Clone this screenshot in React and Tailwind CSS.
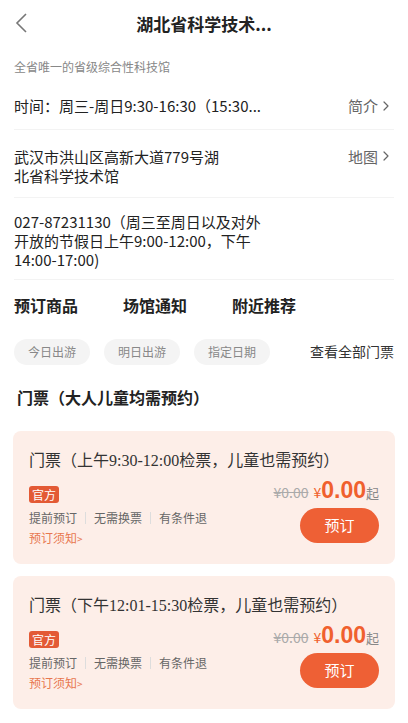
import { ChevronRight } from 'lucide-react';

const sans = 'font-["Noto_Sans_CJK_SC",sans-serif]';

const tickets = [
  { title: '门票（上午9:30-12:00检票，儿童也需预约）' },
  { title: '门票（下午12:01-15:30检票，儿童也需预约）' },
];

function TicketCard({ title }) {
  return (
    <div className="mx-[13px] rounded-lg bg-[#fdeee8] pt-[19px] pb-[16px] pl-[16px] pr-[16px]">
      <div className='font-["Liberation_Serif","Noto_Sans_CJK_SC",serif] text-[16px] leading-[22px] text-[#333]'>{title}</div>
      <div className="flex justify-between">
        <div className="pt-[9px]">
          <span className="inline-flex h-[17px] items-center rounded-[3px] bg-[#e35a35] px-[3px] text-[12px] leading-none text-white">官方</span>
          <div className="mt-[4px] flex items-center text-[12px] leading-[18px] text-[#666]">
            <span>提前预订</span>
            <span className="mx-[8px] h-[12px] w-px bg-[#ddd]" />
            <span>无需换票</span>
            <span className="mx-[8px] h-[12px] w-px bg-[#ddd]" />
            <span>有条件退</span>
          </div>
          <div className="mt-[2px] text-[12px] leading-[18px] text-[#e8774f]">预订须知<span className="text-[10px]">&gt;</span></div>
        </div>
        <div className="flex flex-col items-end pt-[5px]">
          <div className="flex items-baseline">
            <span className="text-[14px] text-[#aaa] line-through">¥0.00</span>
            <span className="ml-[5px] text-[14px] text-[#f0602e]">¥</span>
            <span className='font-["Liberation_Sans",sans-serif] text-[23px] leading-[26px] font-bold text-[#f0602e]'>0.00</span>
            <span className="text-[13px] text-[#888]">起</span>
          </div>
          <button className="mt-[5px] h-[35px] w-[79px] rounded-full bg-[#ee6035] text-[15px] text-white">预订</button>
        </div>
      </div>
    </div>
  );
}

export default function App() {
  return (
    <div className={`${sans} w-[408px] bg-white text-[#222]`}>
      {/* header */}
      <div className="relative flex h-12 items-center justify-center">
        <svg className="absolute left-[14px] top-[13px]" width="16" height="20" viewBox="0 0 16 20" fill="none">
          <polyline points="12,1 3,10 12,19" stroke="#777" strokeWidth="1.6" />
        </svg>
        <div className="text-[17px] font-bold">湖北省科学技术...</div>
      </div>

      <div className="px-[14px]">
        <div className="mt-[10px] text-[12px] leading-[18px] text-[#888]">全省唯一的省级综合性科技馆</div>

        <div className="flex items-center justify-between border-b border-[#f3f3f3] pt-[19px] pb-[11px]">
          <div className="text-[15px] leading-[22px]">时间：周三-周日9:30-16:30（15:30...</div>
          <div className="flex items-center text-[15px] text-[#666]">简介<ChevronRight size={16} strokeWidth={1.8} /></div>
        </div>

        <div className="flex items-start justify-between border-b border-[#f3f3f3] pt-[17px] pb-[12px]">
          <div className="text-[15px] leading-[19px]">武汉市洪山区高新大道779号湖<br />北省科学技术馆</div>
          <div className="flex items-center text-[15px] leading-[19px] text-[#666]">地图<ChevronRight size={16} strokeWidth={1.8} /></div>
        </div>

        <div className="border-b border-[#f3f3f3] pt-[14px] pb-[10px] text-[15px] leading-[19px]">
          027-87231130（周三至周日以及对外<br />开放的节假日上午9:00-12:00，下午<br />14:00-17:00)
        </div>

        <div className="mt-[13px] flex gap-[45px] text-[16px] leading-[24px] font-bold">
          <span>预订商品</span>
          <span>场馆通知</span>
          <span>附近推荐</span>
        </div>

        <div className="mt-[22px] flex items-center">
          <div className="flex gap-[14px]">
            {['今日出游', '明日出游', '指定日期'].map((t) => (
              <span key={t} className="flex h-[26px] items-center rounded-full bg-[#f4f4f4] px-[14px] text-[12px] text-[#888]">{t}</span>
            ))}
          </div>
          <span className="ml-auto text-[14px] text-[#333]">查看全部门票</span>
        </div>

        <div className="mt-[20px] ml-[3px] text-[16px] leading-[24px] font-bold">门票（大人儿童均需预约）</div>
      </div>

      <div className="mt-[22px] flex flex-col gap-[12px] pb-[16px]">
        {tickets.map((t) => (
          <TicketCard key={t.title} title={t.title} />
        ))}
      </div>
    </div>
  );
}
